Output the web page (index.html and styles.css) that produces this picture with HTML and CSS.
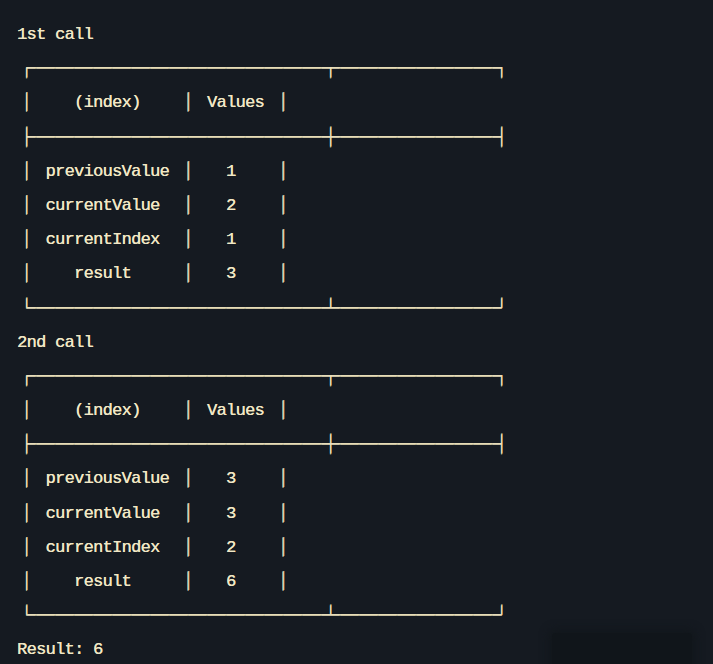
FILE: index.html
```html
<!DOCTYPE html>
<html lang="en">
<head>
<meta charset="utf-8">
<title>Console</title>
<link rel="stylesheet" href="styles.css">
</head>
<body>
<main class="console">
<div class="line">1st call</div>
<div class="line"><span class="b">┌───────────────┬────────┐</span></div>
<div class="line"><span class="b">│</span>    (index)    <span class="b">│</span> Values <span class="b">│</span></div>
<div class="line"><span class="b">├───────────────┼────────┤</span></div>
<div class="line"><span class="b">│</span> previousValue <span class="b">│</span>   1    <span class="b">│</span></div>
<div class="line"><span class="b">│</span> currentValue  <span class="b">│</span>   2    <span class="b">│</span></div>
<div class="line"><span class="b">│</span> currentIndex  <span class="b">│</span>   1    <span class="b">│</span></div>
<div class="line"><span class="b">│</span>    result     <span class="b">│</span>   3    <span class="b">│</span></div>
<div class="line"><span class="b">└───────────────┴────────┘</span></div>
<div class="line">2nd call</div>
<div class="line"><span class="b">┌───────────────┬────────┐</span></div>
<div class="line"><span class="b">│</span>    (index)    <span class="b">│</span> Values <span class="b">│</span></div>
<div class="line"><span class="b">├───────────────┼────────┤</span></div>
<div class="line"><span class="b">│</span> previousValue <span class="b">│</span>   3    <span class="b">│</span></div>
<div class="line"><span class="b">│</span> currentValue  <span class="b">│</span>   3    <span class="b">│</span></div>
<div class="line"><span class="b">│</span> currentIndex  <span class="b">│</span>   2    <span class="b">│</span></div>
<div class="line"><span class="b">│</span>    result     <span class="b">│</span>   6    <span class="b">│</span></div>
<div class="line"><span class="b">└───────────────┴────────┘</span></div>
<div class="line">Result: 6</div>
</main>
<div class="shade"></div>
</body>
</html>
```
FILE: styles.css
```css
html, body {
  margin: 0;
  padding: 0;
  height: 100%;
  overflow: hidden;
  background: #151a21;
}

.console {
  padding: 18px 0 0 17px;
  color: #f1e7c5;
  font-family: "Liberation Mono", "DejaVu Sans Mono", monospace;
  font-size: 17px;
  letter-spacing: -0.7px;
  text-shadow: 0.3px 0 0 #f1e7c5;
}

.line {
  height: 34.2px;
  line-height: 34.2px;
  white-space: pre;
}

.b {
  font-family: "Noto Sans CJK SC", "Noto Sans CJK JP", sans-serif;
  font-size: 19px;
  font-weight: 700;
  letter-spacing: 0;
  line-height: 1;
  vertical-align: -2px;
  color: #ece1bd;
  text-shadow: 0.6px 0 0 #ece1bd, 0 0.6px 0 #ece1bd;
}

.shade {
  position: absolute;
  left: 552px;
  top: 633px;
  width: 140px;
  height: 40px;
  background: #10151a;
  border-radius: 4px;
  box-shadow: 0 0 8px 4px #12171c;
}
```
